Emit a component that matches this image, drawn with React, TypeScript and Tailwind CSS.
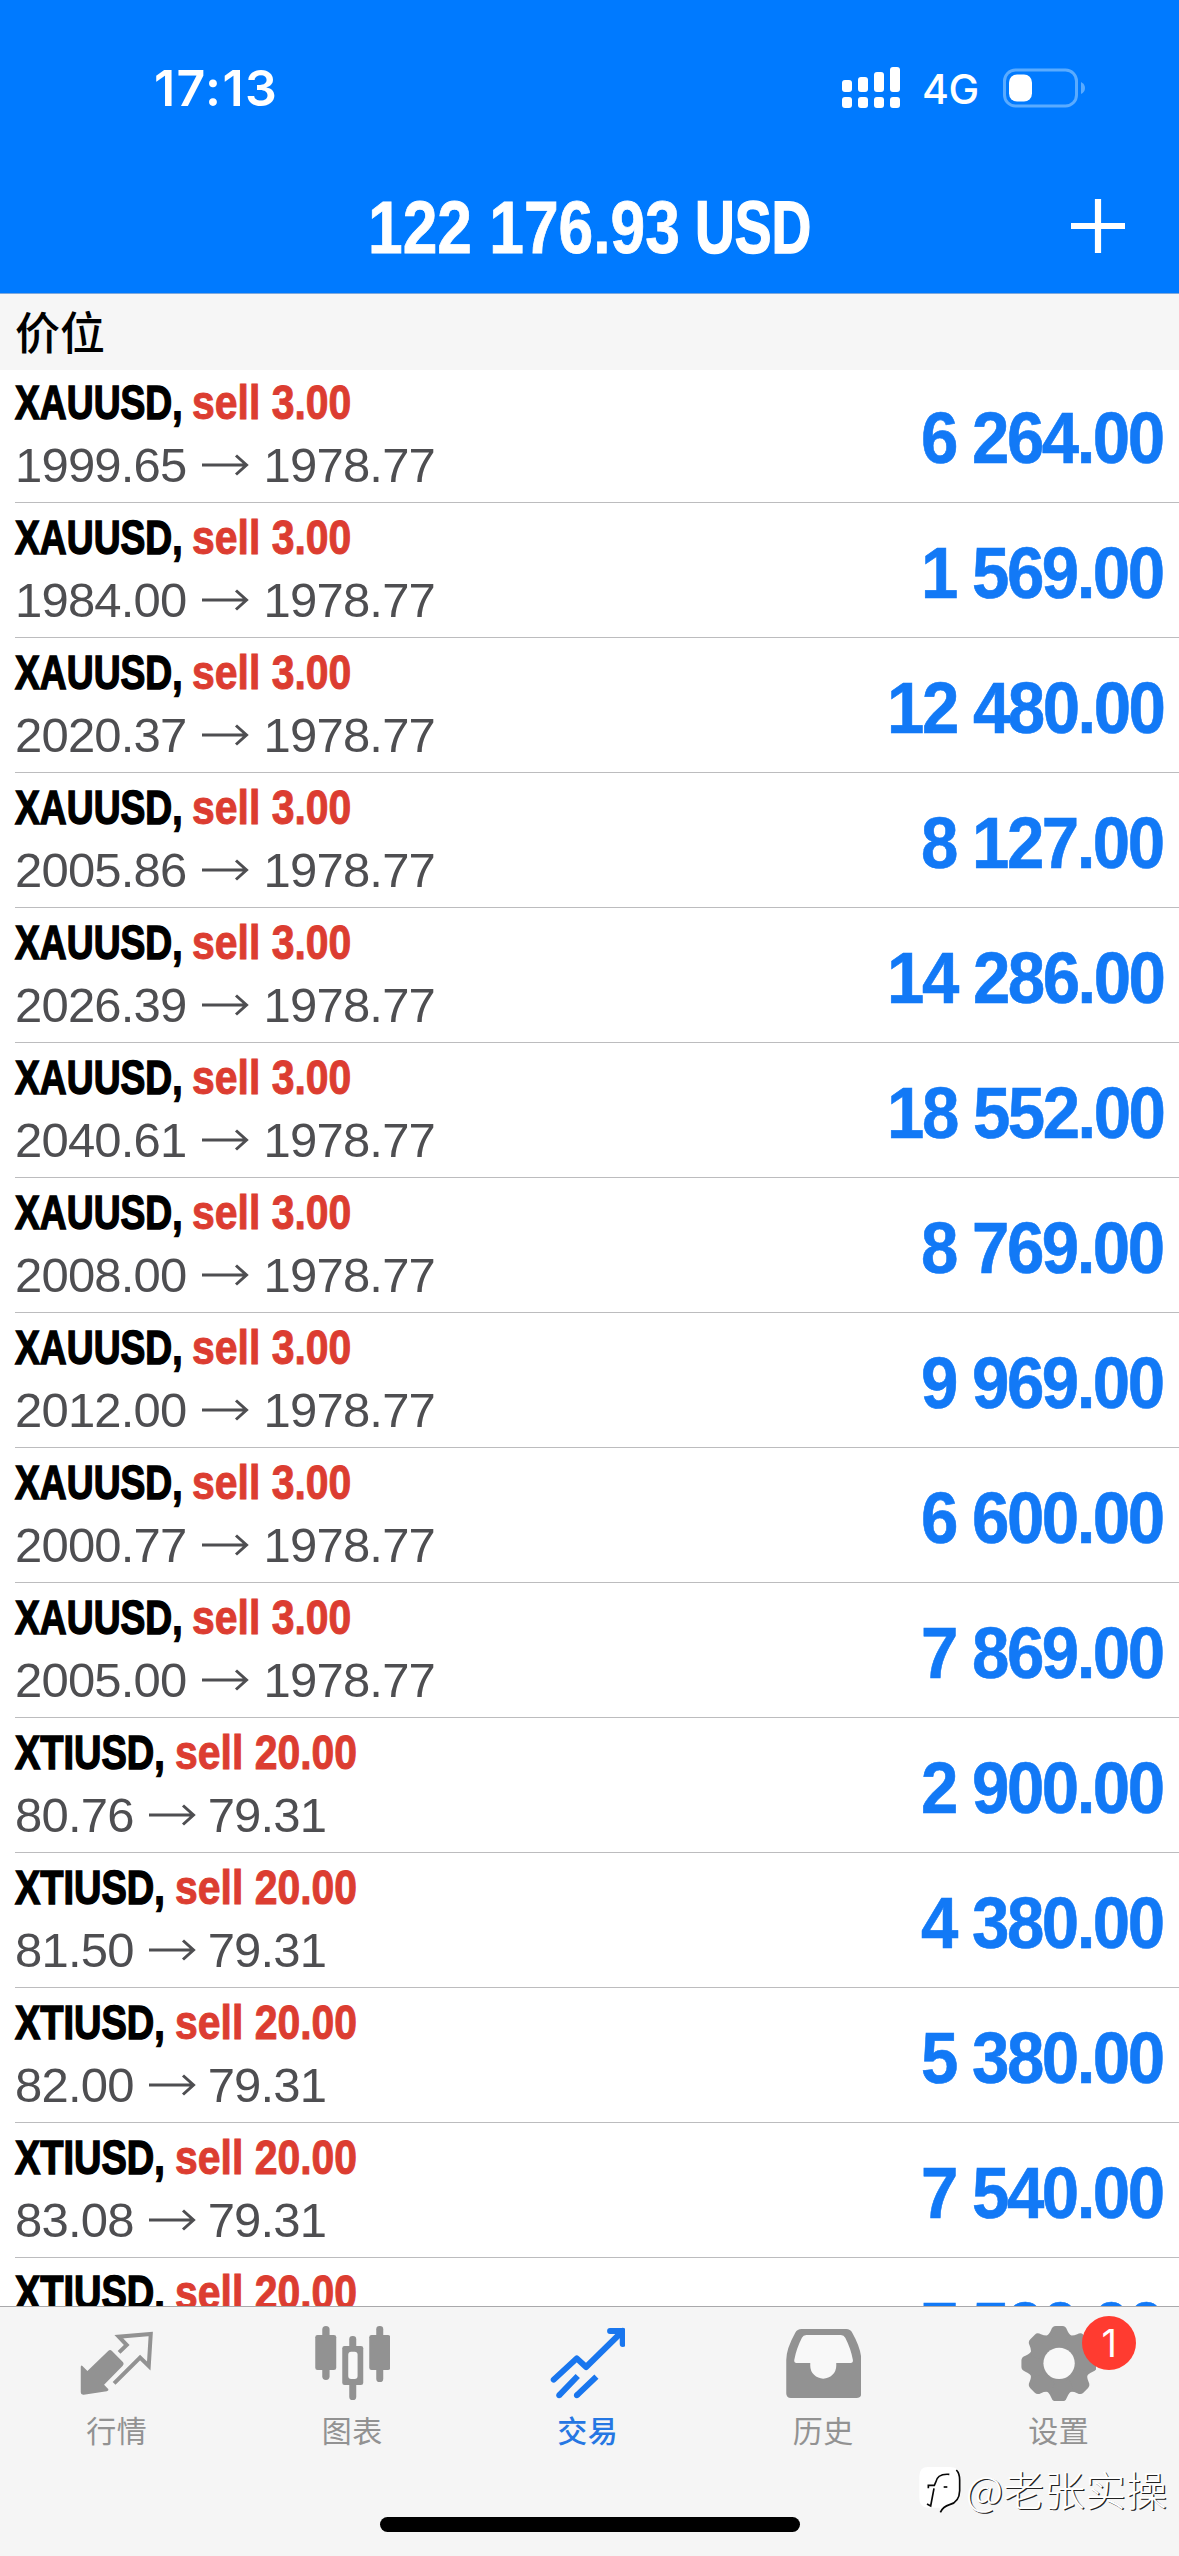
import React from "react";

type Position = {
  symbol: "XAUUSD" | "XTIUSD";
  volume: string;
  open: string;
  current: string;
  profit: string;
};

const gold = (open: string, profit: string): Position => ({
  symbol: "XAUUSD",
  volume: "3.00",
  open,
  current: "1978.77",
  profit,
});

const oil = (open: string, profit: string): Position => ({
  symbol: "XTIUSD",
  volume: "20.00",
  open,
  current: "79.31",
  profit,
});

const positions: Position[] = [
  gold("1999.65", "6 264.00"),
  gold("1984.00", "1 569.00"),
  gold("2020.37", "12 480.00"),
  gold("2005.86", "8 127.00"),
  gold("2026.39", "14 286.00"),
  gold("2040.61", "18 552.00"),
  gold("2008.00", "8 769.00"),
  gold("2012.00", "9 969.00"),
  gold("2000.77", "6 600.00"),
  gold("2005.00", "7 869.00"),
  oil("80.76", "2 900.00"),
  oil("81.50", "4 380.00"),
  oil("82.00", "5 380.00"),
  oil("83.08", "7 540.00"),
  oil("83.10", "7 590.00"),
];

function StatusBar() {
  return (
    <div className="flex h-[164px] items-center pt-[12px] pl-[154px] pr-[93px] font-['Inter',sans-serif] text-white">
      <span className="text-[50px] leading-none font-semibold tracking-[1.4px]">17:13</span>
      <svg className="ml-auto h-[42px] w-[58px]" viewBox="0 0 58 42" fill="white">
        <rect x="0" y="13" width="10" height="12" rx="3" />
        <rect x="16" y="10" width="10" height="15" rx="3" />
        <rect x="32" y="5" width="10" height="20" rx="3" />
        <rect x="48" y="0" width="10" height="25" rx="3" />
        <rect x="0" y="30" width="10" height="11" rx="3" />
        <rect x="16" y="30" width="10" height="11" rx="3" />
        <rect x="32" y="30" width="10" height="11" rx="3" />
        <rect x="48" y="30" width="10" height="11" rx="3" />
      </svg>
      <span className="ml-[22px] w-[58px] pt-[3px] text-[41px] leading-none font-medium tracking-[-0.5px]">4G</span>
      <svg className="ml-[23px] h-[40px] w-[83px]" viewBox="0 0 83 40">
        <rect x="1.5" y="2" width="72" height="36" rx="11" fill="none" stroke="#5aabff" strokeWidth="3" />
        <path d="M78 14 Q82 16 82 20 Q82 24 78 26 Z" fill="#5aabff" />
        <rect x="6" y="6.500" width="23" height="27" rx="8" fill="white" />
      </svg>
    </div>
  );
}

function NavBar() {
  return (
    <div className="grid h-[129px] grid-cols-[1fr_443px_1fr] items-center">
      <span />
      <h1 className="flex text-[74px] leading-none font-bold whitespace-nowrap text-white">
        <span className="-mt-[2px] w-[327px]">
          <span className="inline-block origin-left scale-x-[0.842] [-webkit-text-stroke:0.8px_white]">122 176.93</span>
        </span>
        <span className="-mt-[2px] w-[116px]">
          <span className="inline-block origin-left scale-x-[0.745] [-webkit-text-stroke:1.5px_white]">USD</span>
        </span>
      </h1>
      <svg className="-mt-[5px] mr-[54px] h-[54px] w-[54px] justify-self-end" viewBox="0 0 54 54" stroke="white" strokeWidth="6.2">
        <path d="M27 0V54M0 27H54" />
      </svg>
    </div>
  );
}

function Row({ p }: { p: Position }) {
  const isGold = p.symbol === "XAUUSD";
  return (
    <div className="ml-[15px] flex h-[135px] justify-between border-b border-[#bcbcbe]">
      <div className="pt-[6px]">
        <div className="flex h-[56px] items-center text-[49px] leading-none font-bold whitespace-nowrap">
          <span className={isGold ? "w-[177px]" : "w-[160px]"}>
            <span
              className={
                isGold
                  ? "inline-block origin-left scale-x-[0.76] text-black [-webkit-text-stroke:1.5px_black]"
                  : "inline-block origin-left scale-x-[0.775] text-black [-webkit-text-stroke:1.5px_black]"
              }
            >
              {p.symbol},
            </span>
          </span>
          <span className="inline-block origin-left scale-x-[0.835] text-[#dc3d31] [-webkit-text-stroke:1px_#dc3d31]">
            sell {p.volume}
          </span>
        </div>
        <div className="mt-[5px] flex h-[60px] items-center text-[49px] leading-none tracking-[-0.8px] text-[#4e4e51]">
          <span>{p.open}</span>
          <svg
            className={isGold ? "mr-[15px] ml-[15px] h-[22px] w-[47px]" : "mr-[12px] ml-[15px] h-[22px] w-[47px]"}
            viewBox="0 0 47 22"
            fill="none"
            stroke="#4e4e51"
            strokeWidth="3"
          >
            <path d="M0 11H44M34 1.500L44.500 11L34 20.500" />
          </svg>
          <span>{p.current}</span>
        </div>
      </div>
      <div className="flex items-center pt-[4px] pr-[16px] text-[73px] leading-none font-bold tracking-[-2.700px] whitespace-nowrap text-[#1279f6]">
        <span className="inline-block origin-right scale-x-[0.92] [-webkit-text-stroke:0.6px_#1279f6]">{p.profit}</span>
      </div>
    </div>
  );
}

function QuotesIcon() {
  return (
    <svg className="h-[75px] w-[75px]" viewBox="237.75 318 225 225" fill="#929292">
      <path d="M248 438L263 453L326 392Q331 388 336 392L370 427Q374 432 369 437L313 494L326 508Q327 513 321 514L252 524Q243 525 243 517V442Q243 434 248 438Z" />
      <path
        d="M358 397L381 375L357 350L453 342L447 438L421 413L343 490"
        fill="none"
        stroke="#929292"
        strokeWidth="12"
      />
    </svg>
  );
}

function ChartIcon() {
  return (
    <svg className="h-[75px] w-[75px]" viewBox="944.25 318 225 225" fill="#929292">
      <rect x="966" y="318" width="22" height="162" rx="11" />
      <rect x="945" y="345" width="63" height="105" rx="7" />
      <rect x="1128" y="318" width="21" height="168" rx="10" />
      <rect x="1107" y="345" width="63" height="105" rx="7" />
      <rect x="1047" y="348" width="21" height="192" rx="10" />
      <rect x="1026" y="378" width="63" height="117" rx="7" />
      <rect x="1044" y="395" width="28" height="82" rx="9" fill="#f8f8f8" />
    </svg>
  );
}

function TradeIcon() {
  return (
    <svg className="h-[75px] w-[75px]" viewBox="210.75 318 225 225" fill="none" stroke="#1976ee" strokeWidth="18">
      <path d="M222 479L291 415L319 441L429 333" strokeLinecap="round" strokeLinejoin="round" />
      <path d="M391 333H429V372" strokeLinecap="round" strokeLinejoin="round" />
      <path d="M238 526L294 468M291 526L350 470" />
      <circle cx="238" cy="526" r="8.500" fill="#1976ee" stroke="none" />
      <circle cx="291" cy="526" r="8.500" fill="#1976ee" stroke="none" />
    </svg>
  );
}

function HistoryIcon() {
  return (
    <svg className="h-[75px] w-[75px]" viewBox="917.25 318 225 225">
      <path
        d="M964 327H1098Q1110 327 1116 338Q1143 386 1143 420V520Q1143 534 1129 534H932Q918 534 918 520V420Q918 386 945 338Q951 327 964 327Z"
        fill="#929292"
      />
      <path
        d="M978 345H1082Q1091 345 1095 353Q1112 386 1118 420Q1119 429 1111 429H1068V437A39 39 0 0 1 990 437V429H949Q941 429 942 420Q948 386 965 353Q969 345 978 345Z"
        fill="#f8f8f8"
      />
    </svg>
  );
}

function SettingsIcon() {
  const teeth = [0, 45, 90, 135, 180, 225, 270, 315];
  return (
    <svg className="h-[75px] w-[75px]" viewBox="513.75 318 225 225" fill="#929292">
      <circle cx="628" cy="431" r="88" />
      {teeth.map((angle) => (
        <path
          key={angle}
          transform={`rotate(${angle} 628 431)`}
          d="M584 352Q598 346 604 330Q608 318 618 318H638Q648 318 652 330Q658 346 672 352L660 380H596Z"
        />
      ))}
      <circle cx="628" cy="430" r="47" fill="#f8f8f8" />
    </svg>
  );
}

const tabs = [
  { label: "行情", Icon: QuotesIcon },
  { label: "图表", Icon: ChartIcon },
  { label: "交易", Icon: TradeIcon, active: true },
  { label: "历史", Icon: HistoryIcon },
  { label: "设置", Icon: SettingsIcon, badge: "1" },
];

function TabBar() {
  return (
    <nav className="relative flex h-[250px] flex-col border-t border-[#a9a9ab] bg-[#f5f5f5]">
      <div className="-ml-px flex pt-[19px]">
        {tabs.map(({ label, Icon, active, badge }) => (
          <div key={label} className="flex w-[235.500px] flex-col items-center">
            <div className="relative h-[75px] w-[75px]">
              <Icon />
              {badge && (
                <span className="absolute -top-[10px] left-[61px] flex h-[54px] w-[54px] items-center justify-center rounded-full bg-[#ff3b30] font-['Inter',sans-serif] text-[38px] leading-none text-white">
                  {badge}
                </span>
              )}
            </div>
            <span
              className={
                active
                  ? "mt-[14px] text-[30px] leading-[34px] tracking-[0.500px] text-[#2577e3] font-medium"
                  : "mt-[14px] text-[30px] leading-[34px] tracking-[0.500px] text-[#929292]"
              }
            >
              {label}
            </span>
          </div>
        ))}
      </div>
      <div className="mt-auto mb-[24px] h-[15px] w-[420px] self-center rounded-full bg-black" />
      <div className="absolute top-[155px] right-[12px] flex items-center font-['Noto_Sans_CJK_SC',sans-serif] text-[41px] leading-[52px] font-light whitespace-nowrap text-white [text-shadow:1.2px_1.2px_0px_#222]">
        <svg className="mt-[4px] mr-[5px] h-[48px] w-[42px]" viewBox="198 748 126 144">
          <path d="M225 751H292Q322 751 322 782V822Q322 858 292 868Q276 874 262 889L260 873H225Q199 873 199 845V779Q199 751 225 751Z" fill="white" />
          <path d="M310 760Q320 770 320 790V822Q319 856 290 864Q270 870 262 887" fill="none" stroke="#080808" strokeWidth="5" />
          <path d="M289 773Q253 770 248 797L244 806H226V815M243 815L233 868L222 862" fill="none" stroke="#080808" strokeWidth="5" />
          <path d="M272 811H283" stroke="#080808" strokeWidth="5" />
        </svg>
        <span>@老张实操</span>
      </div>
    </nav>
  );
}

export default function App() {
  return (
    <div className="flex h-[2556px] w-[1179px] flex-col overflow-hidden bg-white font-['Liberation_Sans','Noto_Sans_CJK_SC',sans-serif]">
      <header className="h-[294px] shrink-0 border-b border-[#7fa9dc] bg-[#007aff]">
        <StatusBar />
        <NavBar />
      </header>
      <div className="z-10 flex h-[76px] shrink-0 items-center bg-[#f6f6f6] pt-[5px] pl-[15px] text-[45px] leading-none font-medium text-black">
        价位
      </div>
      <main className="-mt-[2px] min-h-0 flex-1 overflow-hidden">
        {positions.map((p, i) => (
          <Row key={i} p={p} />
        ))}
      </main>
      <TabBar />
    </div>
  );
}
